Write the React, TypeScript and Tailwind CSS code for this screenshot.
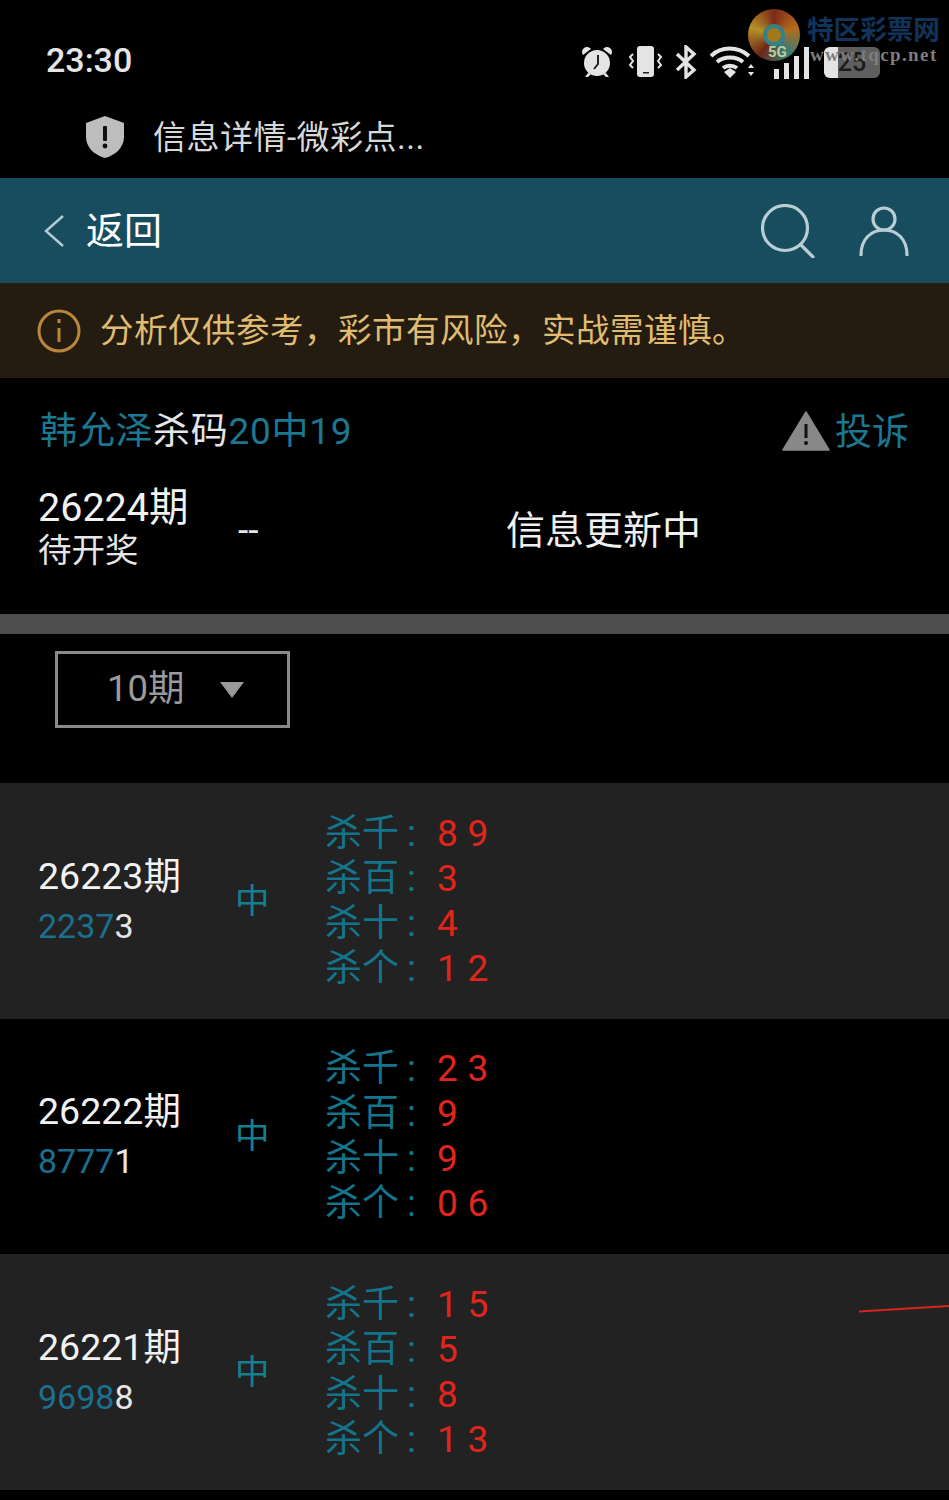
import React from 'react';

const rows = [
  { period: '26223期', hit: '2237', last: '3', dark: false, kills: [['千', '8 9'], ['百', '3'], ['十', '4'], ['个', '1 2']] },
  { period: '26222期', hit: '8777', last: '1', dark: true, kills: [['千', '2 3'], ['百', '9'], ['十', '9'], ['个', '0 6']] },
  { period: '26221期', hit: '9698', last: '8', dark: false, kills: [['千', '1 5'], ['百', '5'], ['十', '8'], ['个', '1 3']] },
];

function StatusIcons() {
  return (
    <div className="flex items-center text-[#e4e4e4]">
      <svg width="34" height="34" viewBox="0 0 34 34" fill="currentColor">
        <circle cx="17" cy="18" r="13" />
        <path d="M3 10a5 5 0 0 1 8-6zM31 10a5 5 0 0 0-8-6zM8 28l-3 4h3l3-3zM26 28l3 4h-3l-3-3z" />
        <path d="M18 10v9l-4 5" stroke="#222" strokeWidth="2" fill="none" />
      </svg>
      <svg className="ml-[14px]" width="34" height="34" viewBox="0 0 34 34" fill="currentColor">
        <rect x="9" y="1" width="17" height="31" rx="3" />
        <rect x="15" y="27" width="6" height="1.5" fill="#222" />
        <path d="M5 9l-3 3 3 4-3 4 3 3M30 9l3 3-3 4 3 4-3 3" stroke="currentColor" strokeWidth="2" fill="none" />
      </svg>
      <svg className="ml-[12px]" width="24" height="34" viewBox="0 0 24 34" fill="none" stroke="currentColor" strokeWidth="3.4">
        <path d="M3 9l17 16-8 7V2l8 7L3 25" />
      </svg>
      <svg className="ml-[12px]" width="46" height="34" viewBox="0 0 46 34" fill="none" stroke="currentColor" strokeWidth="4">
        <path d="M1 11c10-10 27-10 38 0M7 17c7-6 19-6 26 0M13 23c4-3 10-3 14 0" />
        <path d="M14 27l6-4 6 4-6 6z" fill="currentColor" stroke="none" />
        <path d="M38 23l3-4 3 4zM38 27l3 4 3-4z" fill="currentColor" stroke="none" />
      </svg>
      <div className="ml-[18px] flex items-end gap-[5px] h-[34px]">
        <span className="w-[5px] h-[10px] bg-[#e4e4e4]" />
        <span className="w-[5px] h-[16px] bg-[#e4e4e4]" />
        <span className="w-[5px] h-[23px] bg-[#e4e4e4]" />
        <span className="w-[5px] h-[32px] bg-[#e4e4e4]" />
      </div>
      <div className="ml-[15px] w-[56px] h-[31px] rounded-[6px] bg-[#5e5e5e] overflow-hidden relative flex items-center justify-center">
        <span className="absolute left-0 top-0 bottom-0 w-[14px] bg-[#e4e4e4]" />
        <span className="text-[#1c1c1c] text-[25px] leading-none font-medium">25</span>
      </div>
    </div>
  );
}

function Row({ period, hit, last, dark, kills }: (typeof rows)[number]) {
  return (
    <div className={`h-[235.5px] flex items-center pl-[38px] ${dark ? 'bg-black' : 'bg-[#222222]'}`}>
      <div className="w-[197px]">
        <div className="text-[37.5px] leading-[50px] text-[#f2f2f2]">{period}</div>
        <div className="text-[34px] leading-[50px] text-[#1c6f8f]">
          {hit}
          <span className="text-[#e6e6e6]">{last}</span>
        </div>
      </div>
      <div className="w-[90px] text-[34.5px] text-[#14808f] leading-none">中</div>
      <div className="text-[37px] leading-[45px]">
        {kills.map(([place, nums]) => (
          <div key={place} className="flex whitespace-pre">
            <span className="w-[112px] text-[#14748c]">
              杀{place}
              <span className="pl-[8px]">:</span>
            </span>
            <span className="text-[#e0251c] tracking-[0.3px]">{nums}</span>
          </div>
        ))}
      </div>
    </div>
  );
}

export default function App() {
  return (
    <div
      className="relative w-[949px] h-[1500px] overflow-hidden bg-black"
      style={{ fontFamily: 'Roboto, "Noto Sans CJK SC", sans-serif' }}
    >
      {/* status bar */}
      <div className="h-[100px] flex items-end justify-between pl-[46px] pr-[69px] pb-[21px]">
        <span className="text-[34px] leading-[38px] font-medium text-[#e6e6e6]">23:30</span>
        <StatusIcons />
      </div>

      <div className="h-[78px] flex items-center pl-[85px] pb-[4px]">
        <svg width="40" height="44" viewBox="0 0 40 44">
          <path d="M20 1l19 7v14c0 10-8 18-19 21C9 40 1 32 1 22V8z" fill="#bdbdbd" />
          <rect x="18" y="11" width="4" height="15" rx="1" fill="#111" />
          <circle cx="20" cy="31" r="2.4" fill="#111" />
        </svg>
        <span className="ml-[28px] text-[33px] text-[#d8d8d8] leading-none tracking-[0.5px]">信息详情-微彩点...</span>
      </div>

      {/* header */}
      <div className="h-[105px] bg-[#174d5e] flex items-center pl-[43px] pr-[40px]">
        <svg width="22" height="34" viewBox="0 0 22 34" fill="none" stroke="#b5ccd3" strokeWidth="2.4">
          <path d="M20 2L3 17l17 15" />
        </svg>
        <span className="ml-[21px] text-[38px] text-white leading-none">返回</span>
        <svg className="ml-auto" width="54" height="54" viewBox="0 0 54 54" fill="none" stroke="#b9cdd4" strokeWidth="3.2" strokeLinecap="round">
          <circle cx="24" cy="24" r="22.5" />
          <path d="M40 41l12 12" />
        </svg>
        <svg className="ml-[44px]" width="50" height="50" viewBox="0 0 50 50" fill="none" stroke="#b9cdd4" strokeWidth="3.2" strokeLinecap="round">
          <circle cx="25" cy="13" r="11" />
          <path d="M2 49c0-16 10-25 23-25s23 9 23 25" />
        </svg>
      </div>

      {/* notice */}
      <div className="h-[95px] bg-[#241c10] flex items-center pl-[37px]">
        <svg width="44" height="44" viewBox="0 0 44 44" fill="none" stroke="#b9873c" strokeWidth="3">
          <circle cx="22" cy="22" r="20" />
          <path d="M22 19v14" />
          <path d="M22 10v4" />
        </svg>
        <span className="ml-[19px] text-[33.5px] text-[#e0bc72] leading-none tracking-[0.5px]">分析仅供参考，彩市有风险，实战需谨慎。</span>
      </div>

      {/* lottery title */}
      <div className="h-[236px] pl-[39px] pr-[40px] pt-[30px]">
        <div className="flex items-center justify-between h-[46px]">
          <span className="ml-[1px] text-[37px] leading-none text-[#1c7790] tracking-[0.7px]">
            韩允泽<span className="text-[#e6e6e6]">杀码</span>20中19
          </span>
          <div className="flex items-center gap-[5px]">
            <svg width="48" height="40" viewBox="0 0 48 40">
              <path d="M24 1L47 39H1z" fill="#888" stroke="#888" strokeWidth="1.5" strokeLinejoin="round" />
              <rect x="22.5" y="13" width="3" height="14" fill="#111" />
              <circle cx="24" cy="32" r="2" fill="#111" />
            </svg>
            <span className="text-[37px] leading-none text-[#1c7790] pt-[3px]">投诉</span>
          </div>
        </div>
        <div className="flex items-center mt-[32px]">
          <div className="w-[200px] -ml-[1px]">
            <div className="text-[39.5px] leading-[44px] text-[#f2f2f2]">26224期</div>
            <div className="text-[33.5px] leading-[42px] text-[#e6e6e6]">待开奖</div>
          </div>
          <span className="w-[268px] text-[37px] leading-none text-[#e6e6e6] pt-[2px]">--</span>
          <span className="text-[39px] leading-none text-[#efefef] pt-[5px]">信息更新中</span>
        </div>
      </div>

      <div className="h-[20px] bg-[#4d4d4d]" />

      {/* range select */}
      <div className="h-[149px] pl-[55px] pt-[17px]">
        <div className="w-[235px] h-[77px] border-[3px] border-[#8a8a8a] flex items-center pl-[49px]">
          <span className="text-[36.5px] leading-none text-[#9a9a9a]">10期</span>
          <svg className="ml-[35px]" width="24" height="16" viewBox="0 0 24 16">
            <path d="M0 0h24L12 16z" fill="#9a9a9a" />
          </svg>
        </div>
      </div>

      {rows.map((r) => (
        <Row key={r.period} {...r} />
      ))}

      {/* watermark over the status bar */}
      <div className="absolute left-[748px] top-[9px] w-[52px] h-[52px] rounded-full bg-[conic-gradient(#8a2f1c,#c9781f,#3d8a86,#7a2c1c,#c9a22a,#8a2f1c)] flex items-center justify-center opacity-90">
        <span className="w-[22px] h-[22px] rounded-full border-[4px] border-[#3a8f9a] bg-[#b5861f]" />
        <span className="absolute left-[20px] bottom-[1px] text-[15px] leading-none font-bold text-[#cde6b0]">5G</span>
      </div>
      <div className="absolute left-[807px] top-[17px] text-[26.6px] leading-none font-bold text-[#10335a] whitespace-nowrap">特区彩票网</div>
      <div
        className="absolute left-[810px] top-[45px] text-[19px] leading-none font-bold text-[#7d7d7d] tracking-[1.4px] whitespace-nowrap"
        style={{ fontFamily: '"Liberation Serif", serif' }}
      >
        www.tqcp.net
      </div>

      {/* red stroke drawn across the third row */}
      <svg className="absolute left-[859px] top-[1304px]" width="90" height="9" viewBox="0 0 90 9">
        <path d="M0 7.5L90 2" stroke="#d8241c" strokeWidth="2" />
      </svg>
    </div>
  );
}
